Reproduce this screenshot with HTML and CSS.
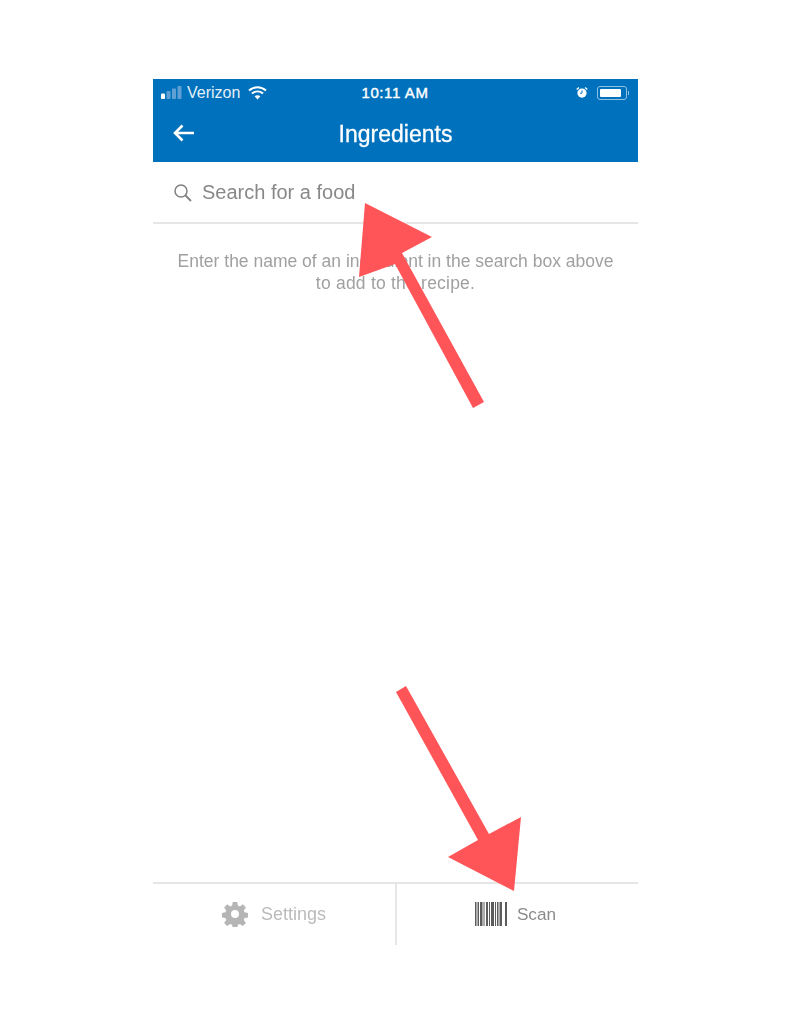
FILE: index.html
```html
<!DOCTYPE html>
<html lang="en">
<head>
<meta charset="utf-8">
<title>Ingredients</title>
<link rel="stylesheet" href="styles.css">
</head>
<body>
<div class="phone">
  <header class="appbar">
    <div class="status">
      <div class="status-left">
        <svg class="signal" width="21" height="13" viewBox="0 0 21 13"><rect x="0" y="7.500" width="4" height="5.500" rx=".8" fill="#fff"/><rect x="5.500" y="5" width="4" height="8" rx=".8" fill="#5f9fd3"/><rect x="11" y="2.500" width="4" height="10.500" rx=".8" fill="#5f9fd3"/><rect x="16.500" y="0" width="4" height="13" rx=".8" fill="#5f9fd3"/></svg>
        <span class="carrier">Verizon</span>
        <svg class="wifi" width="19" height="14" viewBox="0 0 19 14"><g fill="none" stroke="#fff" stroke-width="2"><path d="M1 4.600C6 .2 13 .2 18 4.600"/><path d="M3.900 7.600c3.300-2.800 7.900-2.800 11.200 0"/></g><path d="M6.600 10.200c1.800-1.400 4-1.400 5.800 0L9.500 13.400z" fill="#fff"/></svg>
      </div>
      <span class="clock">10:11 AM</span>
      <div class="status-right">
        <svg class="alarm" width="12" height="13" viewBox="0 0 14 14"><circle cx="7" cy="7.600" r="5.400" fill="#fff"/><path d="M7 4.500v3.300H4.600" fill="none" stroke="#0071bc" stroke-width="1.100"/><path d="M.8 3.600 3.400 1.200M13.200 3.600 10.600 1.200" stroke="#fff" stroke-width="1.500" fill="none"/></svg>
        <div class="battery"><div class="battery-fill"></div></div>
        <div class="battery-tip"></div>
      </div>
    </div>
    <div class="titlebar">
      <svg class="back" width="22" height="18" viewBox="0 0 22 18"><path d="M21 9H2M9.500 1.500 2 9l7.500 7.500" fill="none" stroke="#fff" stroke-width="2.600"/></svg>
      <h1 class="title">Ingredients</h1>
    </div>
  </header>
  <div class="search">
    <svg class="search-icon" width="20" height="20" viewBox="0 0 20 20"><circle cx="8" cy="8" r="6" fill="none" stroke="#808080" stroke-width="1.500"/><path d="m12.500 12.500 5.500 5.500" stroke="#808080" stroke-width="1.800"/></svg>
    <span class="search-text">Search for a food</span>
  </div>
  <main class="content">
    <p class="hint">Enter the name of an ingredient in the search box above<br><span class="hint-second">to add to the recipe.</span></p>
  </main>
  <nav class="tabs">
    <div class="tab tab-settings">
      <svg width="26" height="26" viewBox="0 0 26 26"><g fill="#b5b5b5"><path fill-rule="evenodd" d="M10.800 1h4.400l.7 3.600 1.900.8 3-2.100 3.100 3.100-2.100 3 .8 1.900 3.600.7v4.400l-3.600.7-.8 1.900 2.100 3-3.100 3.100-3-2.100-1.900.8-.7 3.600h-4.400l-.7-3.600-1.900-.8-3 2.100-3.100-3.100 2.100-3-.8-1.900-3.600-.7v-4.400l3.600-.7.8-1.900-2.100-3 3.100-3.100 3 2.100 1.900-.8zM13 9a4 4 0 1 0 0 8 4 4 0 0 0 0-8z"/></g></svg>
      <span>Settings</span>
    </div>
    <div class="tab tab-scan">
      <svg width="32" height="24" viewBox="0 0 32 24"><g fill="#5c5c5c"><rect x="0" width="1.500" height="24"/><rect x="2.500" width="1.500" height="24"/><rect x="5" width="2.500" height="24"/><rect x="8.500" width="1" height="24"/><rect x="11" width="2" height="24"/><rect x="14" width="1" height="24"/><rect x="16" width="3" height="24"/><rect x="20" width="1" height="24"/><rect x="22" width="1.500" height="24"/><rect x="24.500" width="2.500" height="24"/><rect x="30" width="2" height="24"/></g></svg>
      <span>Scan</span>
    </div>
  </nav>
</div>
<svg class="arrows" width="791" height="1024" viewBox="0 0 791 1024">
  <path fill="#ff5558" d="M365 203 432 237 402 253 484 402 473 408 395 264 359 277z"/>
  <path fill="#ff5558" d="M396 692 406 686 489 834 521 817 514 891 448 857 478 840z"/>
</svg>
</body>
</html>
```

FILE: styles.css
```css
html, body {
  margin: 0;
  background: #fff;
}
body {
  position: relative;
  width: 791px;
  height: 1024px;
  padding: 79px 0 0 153px;
  box-sizing: border-box;
  overflow: hidden;
  font-family: "Liberation Sans", Arial, sans-serif;
}
.phone {
  width: 485px;
  height: 866px;
  display: flex;
  flex-direction: column;
  filter: blur(.4px);
}
.appbar {
  height: 83px;
  background: #0071bc;
  color: #fff;
  display: flex;
  flex-direction: column;
}
.status {
  display: grid;
  grid-template-columns: 1fr auto 1fr;
  align-items: center;
  height: 27px;
  padding: 0 9px 0 8px;
}
.status-left {
  display: flex;
  align-items: center;
}
.signal { margin-right: 5px; }
.carrier {
  font-size: 16px;
  opacity: .9;
  margin-right: 8px;
}
.clock {
  font-size: 15px;
  letter-spacing: .6px;
  -webkit-text-stroke: .4px #fff;
}
.status-right {
  display: flex;
  align-items: center;
  justify-content: flex-end;
}
.alarm { margin-right: 9px; }
.battery {
  width: 30px;
  height: 14px;
  box-sizing: border-box;
  border: 1px solid #8fc0e2;
  border-radius: 3px;
  padding: 2px;
}
.battery-fill {
  width: 21px;
  height: 8px;
  background: #fff;
  border-radius: 1px;
}
.battery-tip {
  width: 1.500px;
  height: 4px;
  background: #8fc0e2;
  margin-left: 1px;
}
.titlebar {
  flex: 1;
  display: flex;
  align-items: center;
  justify-content: center;
  position: relative;
}
.back {
  position: absolute;
  left: 20px;
  top: 18px;
}
.title {
  margin: 0;
  font-size: 23px;
  font-weight: 400;
  -webkit-text-stroke: .3px #fff;
}
.search {
  height: 62px;
  box-sizing: border-box;
  border-bottom: 2px solid #e6e6e6;
  display: flex;
  align-items: center;
  padding: 1px 0 0 20px;
  color: #888;
}
.search-icon { margin-right: 9px; }
.search-text { font-size: 20px; }
.content {
  flex: 1;
  text-align: center;
}
.hint {
  margin: 26px 0 0;
  font-size: 17.500px;
  line-height: 22px;
  color: #a0a0a0;
}
.hint-second { letter-spacing: .22px; }
.tabs {
  height: 63px;
  box-sizing: border-box;
  border-top: 2px solid #e6e6e6;
  display: grid;
  grid-template-columns: 244px 1fr;
}
.tab {
  display: flex;
  align-items: center;
  justify-content: center;
  gap: 13px;
  font-size: 18px;
}
.tab svg { margin-bottom: 2px; }
.tab-settings {
  color: #bbb;
  border-right: 2px solid #e6e6e6;
}
.tab-scan {
  color: #8c8c8c;
  font-size: 17.200px;
  gap: 10px;
  padding-right: 4px;
}
.arrows {
  position: absolute;
  left: 0;
  top: 0;
}
```
